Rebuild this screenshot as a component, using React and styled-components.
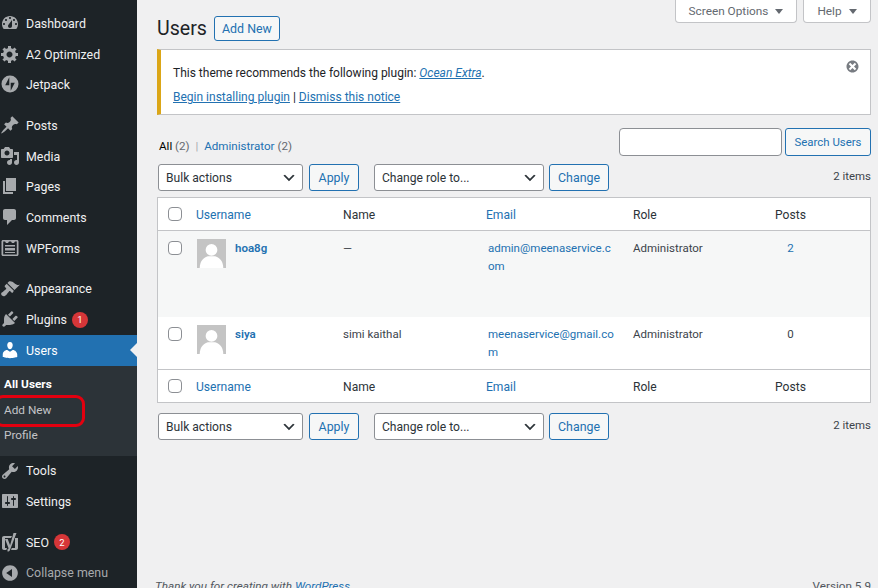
import React from 'react';
import styled, { createGlobalStyle } from 'styled-components';

const GlobalStyle = createGlobalStyle`
  html, body {
    margin: 0;
    height: 100%;
    overflow: hidden;
    background: #f0f0f1;
  }
  body {
    font-family: Roboto, "Open Sans", "Liberation Sans", sans-serif;
    font-size: 12.1px;
    color: #3c434a;
  }
  * {
    box-sizing: border-box;
  }
`;

const chevron = `url("data:image/svg+xml,%3Csvg xmlns='http://www.w3.org/2000/svg' width='16' height='16' viewBox='0 0 20 20'%3E%3Cpath d='M5 6l5 5 5-5 2 1-7 7-7-7z' fill='%232c3338'/%3E%3C/svg%3E")`;

const Page = styled.div`
  display: flex;
  width: 878px;
  height: 588px;
  overflow: hidden;
`;

const Sidebar = styled.nav`
  flex: none;
  width: 137px;
  height: 588px;
  padding-top: 8px;
  background: #1d2327;
`;

const MenuItem = styled.div`
  position: relative;
  display: flex;
  align-items: center;
  height: 30.7px;
  padding-left: 26px;
  font-size: 12.4px;
  color: ${p => (p.$active ? '#fff' : p.$dim ? '#a7aaad' : '#f0f0f1')};
  background: ${p => (p.$active ? '#2271b1' : 'transparent')};
  svg.icon {
    position: absolute;
    left: 0;
    top: 5px;
    width: 20px;
    height: 20px;
    fill: ${p => (p.$active ? '#fff' : '#a7aaad')};
  }
`;

const ActiveArrow = styled.span`
  position: absolute;
  right: 0;
  top: 8px;
  border: 7px solid transparent;
  border-right-color: #f0f0f1;
  border-left-width: 0;
`;

const Separator = styled.div`
  height: 10px;
`;

const Badge = styled.span`
  display: inline-flex;
  align-items: center;
  justify-content: center;
  width: 16px;
  height: 16px;
  margin-left: 5px;
  border-radius: 50%;
  background: #d63638;
  color: #fff;
  font-size: 9.5px;
`;

const SubMenu = styled.div`
  display: flex;
  flex-direction: column;
  height: 90px;
  padding-top: 6px;
  background: #2c3338;
`;

const SubItem = styled.div`
  position: relative;
  display: flex;
  align-items: center;
  height: 25.5px;
  padding-left: 4px;
  font-size: 11.8px;
  font-weight: ${p => (p.$current ? 700 : 400)};
  color: ${p => (p.$current ? '#fff' : '#c3c4c7')};
`;

const RedMark = styled.span`
  position: absolute;
  left: -6px;
  top: -2px;
  width: 91px;
  height: 32px;
  border: 3px solid #e3000f;
  border-radius: 9px;
`;

const Main = styled.main`
  flex: 1;
  min-width: 0;
  display: flex;
  flex-direction: column;
  padding: 0 7px 0 20px;
  > * {
    flex: none;
  }
`;

const ScreenTabs = styled.div`
  display: flex;
  justify-content: flex-end;
  gap: 6px;
  height: 23px;
`;

const ScreenTab = styled.button`
  display: flex;
  align-items: center;
  justify-content: center;
  gap: 7px;
  width: ${p => p.$width}px;
  height: 23px;
  padding: 0;
  border: 1px solid #c3c4c7;
  border-top: 0;
  border-radius: 0 0 4px 4px;
  background: #fff;
  color: #646970;
  font: inherit;
  font-size: 11.8px;
  &::after {
    content: '';
    border: 4px solid transparent;
    border-top: 5px solid #646970;
    border-bottom: 0;
  }
`;

const TitleRow = styled.div`
  display: flex;
  align-items: center;
  gap: 7px;
  height: 26px;
  margin-top: -8px;
`;

const Title = styled.h1`
  margin: 0;
  font-size: 19.6px;
  font-weight: 400;
  color: #1d2327;
`;

const Button = styled.button`
  flex: none;
  height: ${p => p.$height || 27}px;
  width: ${p => p.$width}px;
  padding: 0;
  border: 1px solid #2271b1;
  border-radius: 3px;
  background: #f6f7f7;
  color: #2271b1;
  font: inherit;
  font-size: ${p => p.$size || 12.4}px;
`;

const Notice = styled.div`
  display: flex;
  justify-content: space-between;
  height: 66px;
  margin-top: 8px;
  padding: 11px 12px 0 12px;
  background: #fff;
  border: 1px solid #c3c4c7;
  border-left: 4px solid #dba617;
`;

const NoticeText = styled.div`
  color: #1d2327;
  font-size: 12px;
  line-height: 24px;
  a {
    color: #2271b1;
    text-decoration: underline;
  }
`;

const DismissIcon = styled.svg`
  width: 15px;
  height: 15px;
  margin: -2px -2px 0 0;
  fill: #787c82;
`;

const FilterRow = styled.div`
  display: flex;
  justify-content: space-between;
  align-items: flex-start;
  height: 36px;
  margin-top: 13px;
`;

const Views = styled.div`
  margin: 11px 0 0 2px;
  color: #646970;
  font-size: 11.6px;
  b {
    font-weight: 400;
    color: #000;
  }
  a {
    color: #2271b1;
  }
  i {
    font-style: normal;
    color: #a7aaad;
    margin: 0 3px;
  }
`;

const SearchBox = styled.div`
  display: flex;
  gap: 3px;
`;

const SearchInput = styled.input`
  width: 163px;
  height: 28px;
  border: 1px solid #8c8f94;
  border-radius: 4px;
  background: #fff;
`;

const TableNav = styled.div`
  display: flex;
  align-items: center;
  height: 27px;
  margin-left: 1px;
`;

const Select = styled.select`
  appearance: none;
  flex: none;
  width: ${p => p.$width}px;
  height: 27px;
  margin-left: ${p => p.$before || 0}px;
  margin-right: ${p => p.$gap}px;
  padding: 0 24px 0 7px;
  border: 1px solid #8c8f94;
  border-radius: 3px;
  background: #fff ${chevron} no-repeat right 5px center;
  color: #2c3338;
  font: inherit;
`;

const ItemCount = styled.span`
  margin-left: auto;
  margin-top: -4px;
  color: #3c434a;
  font-size: 11.4px;
`;

const Table = styled.table`
  width: 714px;
  margin: 6px 0 10px;
  table-layout: fixed;
  border-collapse: separate;
  border-spacing: 0;
  background: #fff;
  border: 1px solid #c3c4c7;
`;

const HeadCell = styled.th`
  height: 33px;
  padding: 1px 8px 0;
  text-align: left;
  font-weight: 400;
  color: #2c3338;
  ${p => (p.$foot ? 'border-top: 1px solid #c3c4c7;' : 'border-bottom: 1px solid #c3c4c7;')}
  a {
    color: #2271b1;
  }
`;

const PostsHead = styled(HeadCell)`
  padding: 1px 58px 0 0;
  text-align: center;
`;

const CheckCell = styled(HeadCell)`
  padding: 0 0 0 10px;
`;

const Row = styled.tr`
  background: ${p => (p.$alt ? '#f6f7f7' : '#fff')};
`;

const Cell = styled.td`
  height: ${p => p.$height}px;
  padding: 8px 8px 0;
  vertical-align: top;
  line-height: 18px;
  font-size: 11.5px;
`;

const EmailCell = styled(Cell)`
  padding: 8px 10px 0;
  color: #2271b1;
  word-break: break-all;
`;

const PostsCell = styled(Cell)`
  padding: 8px 58px 0 0;
  text-align: center;
  color: ${p => (p.$linked ? '#2271b1' : '#3c434a')};
`;

const CheckBodyCell = styled(Cell)`
  padding: 10px 0 0 10px;
`;

const UserCell = styled.div`
  display: flex;
  gap: 9px;
  margin-left: 1px;
  color: #2271b1;
  font-weight: 600;
`;

const Avatar = styled.svg`
  flex: none;
  width: 29px;
  height: 29px;
`;

const Checkbox = styled.input`
  appearance: none;
  display: block;
  width: 14px;
  height: 14px;
  margin: 0;
  border: 1px solid #8c8f94;
  border-radius: 4px;
  background: #fff;
`;

const Footer = styled.footer`
  display: flex;
  justify-content: space-between;
  margin: 139px 0 0 -2px;
  color: #50575e;
  font-size: 11.7px;
  i a {
    color: #2271b1;
  }
`;

const Icon = ({ d }) => (
  <svg className="icon" viewBox="0 0 20 20">
    <path d={d} />
  </svg>
);

const icons = {
  dashboard:
    'M3.76 16h12.48c1.1-1.37 1.76-3.11 1.76-5 0-4.42-3.58-8-8-8s-8 3.58-8 8c0 1.89.66 3.63 1.76 5zM10 4c.55 0 1 .45 1 1s-.45 1-1 1-1-.45-1-1 .45-1 1-1zM6 6c.55 0 1 .45 1 1s-.45 1-1 1-1-.45-1-1 .45-1 1-1zm8 0c.55 0 1 .45 1 1s-.45 1-1 1-1-.45-1-1 .45-1 1-1zm-5.37 5.55L12 7v6c0 1.1-.9 2-2 2s-2-.9-2-2c0-.57.24-1.08.63-1.45zM4 10c.55 0 1 .45 1 1s-.45 1-1 1-1-.45-1-1 .45-1 1-1zm12 0c.55 0 1 .45 1 1s-.45 1-1 1-1-.45-1-1 .45-1 1-1z',
  gear:
    'M18 12h-2.18c-.17.7-.44 1.35-.81 1.93l1.54 1.54-2.1 2.1-1.54-1.54c-.58.36-1.23.63-1.91.79V19H8v-2.18c-.68-.16-1.33-.43-1.91-.79l-1.54 1.54-2.12-2.12 1.54-1.54c-.36-.58-.63-1.23-.79-1.91H1V9.03h2.17c.16-.7.44-1.35.8-1.94L2.43 5.55l2.1-2.1 1.54 1.54c.58-.37 1.24-.64 1.93-.81V2h3v2.18c.68.16 1.33.43 1.91.79l1.54-1.54 2.12 2.12-1.54 1.54c.36.59.64 1.24.8 1.94H18V12zm-8.5 1.5c1.66 0 3-1.34 3-3s-1.34-3-3-3-3 1.34-3 3 1.34 3 3 3z',
  jetpack:
    'M10 1.5a8.5 8.5 0 1 0 0 17 8.5 8.5 0 0 0 0-17zM9.3 11.2H5.2l4.1-8zm1.4 5.6V8.8h4.1z',
  pin:
    'M10.44 3.02l1.82-1.82 6.36 6.35-1.83 1.82c-1.05-.68-2.48-.57-3.41.36l-.75.75c-.92.93-1.04 2.35-.35 3.41l-1.83 1.82-2.41-2.41-2.8 2.79c-.42.42-3.38 2.71-3.8 2.29s1.86-3.39 2.28-3.81l2.79-2.79L4.1 9.36l1.83-1.82c1.05.69 2.48.57 3.4-.36l.75-.75c.93-.92 1.05-2.35.36-3.41z',
  media:
    'M13 11V4c0-.55-.45-1-1-1h-1.67L9 1H5L3.67 3H2c-.55 0-1 .45-1 1v7c0 .55.45 1 1 1h10c.55 0 1-.45 1-1zM7 4.5c1.38 0 2.5 1.12 2.5 2.5S8.38 9.5 7 9.5 4.5 8.38 4.5 7 5.62 4.5 7 4.5zM14 6h5v10.5c0 1.38-1.12 2.5-2.5 2.5S14 17.88 14 16.5s1.12-2.5 2.5-2.5c.17 0 .34.02.5.05V9h-3V6zm-4 8.05V13h2v3.5c0 1.38-1.12 2.5-2.5 2.5S7 17.88 7 16.5 8.12 14 9.5 14c.17 0 .34.02.5.05z',
  pages: 'M6 15V2h10v13H6zm-1 1h8v2H3V5h2v11z',
  comments:
    'M5 2h9c1.1 0 2 .9 2 2v7c0 1.1-.9 2-2 2h-2l-5 5v-5H5c-1.1 0-2-.9-2-2V4c0-1.1.9-2 2-2z',
  forms:
    'M3 2h14c.8 0 1.5.7 1.5 1.5v13c0 .8-.7 1.5-1.5 1.5H3c-.8 0-1.5-.7-1.5-1.5v-13C1.5 2.7 2.2 2 3 2zm.2 1.5v13h13.6v-13H15l-1 1.5h-2L11 3.5H9L8 5H6L5 3.5zM5 7h10v1.5H5zm0 3h10v2.5H5zm0 4h10v1H5z',
  brush:
    'M14.48 11.06L7.41 3.99l1.5-1.5c.5-.56 2.3-.47 3.51.32 1.21.8 1.43 1.28 2.91 2.1 1.18.64 2.45 1.26 4.45.85zm-.71.71L6.7 4.7 4.93 6.47c-.39.39-.39 1.02 0 1.41l1.06 1.06c.39.39.39 1.03 0 1.42-.6.6-1.43 1.11-2.21 1.69-.35.26-.7.53-1.01.84C1.43 13.23.4 14.8 2 16.4c1.6 1.6 3.17.57 4.51-.77.31-.31.58-.66.84-1.01.58-.78 1.09-1.61 1.69-2.21.39-.39 1.03-.39 1.42 0l1.06 1.06c.39.39 1.02.39 1.41 0z',
  plugin:
    'M13.11 4.36L9.87 7.6 8 5.73l3.24-3.24c.35-.34 1.05-.2 1.56.32.52.51.66 1.21.31 1.55zm-8 1.77l.91-1.12 9.01 9.01-1.19.84c-.71.71-2.63 1.16-3.82 1.16H6.14L4.9 17.26c-.59.59-1.54.59-2.12 0-.59-.58-.59-1.53 0-2.12l1.24-1.24v-3.88c0-1.13.4-3.19 1.09-3.89zm7.26 3.97l3.24-3.24c.34-.35 1.04-.21 1.55.31.52.51.66 1.21.31 1.55l-3.24 3.25z',
  users:
    'M10 9.25c-2.27 0-2.73-3.44-2.73-3.44C7 4.02 7.82 2 9.97 2c2.16 0 2.98 2.02 2.71 3.81 0 0-.41 3.44-2.68 3.44zm0 2.57L12.72 10c2.39 0 4.52 2.33 4.52 4.53v2.49s-3.65 1.13-7.24 1.13c-3.65 0-7.24-1.13-7.24-1.13v-2.49c0-2.25 1.94-4.48 4.47-4.48z',
  tools:
    'M16.68 9.77c-1.34 1.34-3.3 1.67-4.95.99l-5.41 6.52c-.99.99-2.59.99-3.58 0s-.99-2.59 0-3.57l6.52-5.42c-.68-1.65-.35-3.61.99-4.95 1.28-1.28 3.12-1.62 4.72-1.06l-2.89 2.89 2.82 2.82 2.86-2.87c.53 1.58.18 3.39-1.08 4.65zM3.81 16.21c.4.39 1.04.39 1.43 0 .4-.4.4-1.04 0-1.43-.39-.4-1.03-.4-1.43 0-.39.39-.39 1.03 0 1.43z',
  settings:
    'M18 16V4c0-.55-.45-1-1-1H3c-.55 0-1 .45-1 1v12c0 .55.45 1 1 1h14c.55 0 1-.45 1-1zM8 11h1c.55 0 1 .45 1 1s-.45 1-1 1H8v1.5c0 .28-.22.5-.5.5s-.5-.22-.5-.5V13H6c-.55 0-1-.45-1-1s.45-1 1-1h1V5.5c0-.28.22-.5.5-.5s.5.22.5.5V11zm5-2h-1c-.55 0-1-.45-1-1s.45-1 1-1h1V5.5c0-.28.22-.5.5-.5s.5.22.5.5V7h1c.55 0 1 .45 1 1s-.45 1-1 1h-1v5.5c0 .28-.22.5-.5.5s-.5-.22-.5-.5V9z',
  yoast:
    'M4 4h8l-1 2H5v10h2l-.7 2H4c-1.1 0-2-.9-2-2V6c0-1.1.9-2 2-2zm9.5-3h3L10 18c-.5 1-1.2 1.5-2.5 1.5v-2.2c.6-.1 1-.4 1.1-1L5 7h2.7l2.4 6.2zM15 6h3v10c0 1.1-.9 2-2 2h-5l.8-2H15z',
  collapse:
    'M10 2.16c4.33 0 7.84 3.51 7.84 7.84s-3.51 7.84-7.84 7.84S2.16 14.33 2.16 10 5.71 2.16 10 2.16zm2 11.72V6.12L6.18 9.97z'
};

const Menu = ({ icon, children, active, dim }) => (
  <MenuItem $active={active} $dim={dim}>
    <Icon d={icons[icon]} />
    {children}
    {active && <ActiveArrow />}
  </MenuItem>
);

const MysteryMan = () => (
  <Avatar viewBox="0 0 32 32">
    <rect width="32" height="32" fill="#c4c4c4" />
    <circle cx="16" cy="12" r="6.5" fill="#fff" />
    <path d="M3 32c0-8 5-12 9-13h8c4 1 9 5 9 13z" fill="#fff" />
  </Avatar>
);

const Actions = () => (
  <TableNav>
    <Select $width={145} $gap={6} defaultValue="bulk">
      <option value="bulk">Bulk actions</option>
    </Select>
    <Button $width={50}>Apply</Button>
    <Select $width={170} $before={15} $gap={5} defaultValue="role">
      <option value="role">Change role to...</option>
    </Select>
    <Button $width={60}>Change</Button>
    <ItemCount>2 items</ItemCount>
  </TableNav>
);

const HeaderRow = ({ foot }) => (
  <tr>
    <CheckCell $foot={foot}>
      <Checkbox type="checkbox" />
    </CheckCell>
    <HeadCell $foot={foot}>
      <a>Username</a>
    </HeadCell>
    <HeadCell $foot={foot}>Name</HeadCell>
    <HeadCell $foot={foot}>
      <a>Email</a>
    </HeadCell>
    <HeadCell $foot={foot}>Role</HeadCell>
    <PostsHead $foot={foot}>Posts</PostsHead>
  </tr>
);

const App = () => {
  return (
    <Page>
      <GlobalStyle />
      <Sidebar>
        <Menu icon="dashboard">Dashboard</Menu>
        <Menu icon="gear">A2 Optimized</Menu>
        <Menu icon="jetpack">Jetpack</Menu>
        <Separator />
        <Menu icon="pin">Posts</Menu>
        <Menu icon="media">Media</Menu>
        <Menu icon="pages">Pages</Menu>
        <Menu icon="comments">Comments</Menu>
        <Menu icon="forms">WPForms</Menu>
        <Separator />
        <Menu icon="brush">Appearance</Menu>
        <Menu icon="plugin">
          Plugins<Badge>1</Badge>
        </Menu>
        <Menu icon="users" active>
          Users
        </Menu>
        <SubMenu>
          <SubItem $current>All Users</SubItem>
          <SubItem>
            Add New
            <RedMark />
          </SubItem>
          <SubItem>Profile</SubItem>
        </SubMenu>
        <Menu icon="tools">Tools</Menu>
        <Menu icon="settings">Settings</Menu>
        <Separator />
        <Menu icon="yoast">
          SEO<Badge>2</Badge>
        </Menu>
        <Menu icon="collapse" dim>
          Collapse menu
        </Menu>
      </Sidebar>
      <Main>
        <ScreenTabs>
          <ScreenTab $width={122}>Screen Options</ScreenTab>
          <ScreenTab $width={68}>Help</ScreenTab>
        </ScreenTabs>
        <TitleRow>
          <Title>Users</Title>
          <Button $width={66} $height={25}>
            Add New
          </Button>
        </TitleRow>
        <Notice>
          <NoticeText>
            <div>
              This theme recommends the following plugin:{' '}
              <a>
                <i>Ocean Extra</i>
              </a>
              .
            </div>
            <div>
              <a>Begin installing plugin</a> | <a>Dismiss this notice</a>
            </div>
          </NoticeText>
          <DismissIcon viewBox="0 0 20 20">
            <path d="M10 2c4.42 0 8 3.58 8 8s-3.58 8-8 8-8-3.58-8-8 3.58-8 8-8zm5 11l-3-3 3-3-2-2-3 3-3-3-2 2 3 3-3 3 2 2 3-3 3 3z" />
          </DismissIcon>
        </Notice>
        <FilterRow>
          <Views>
            <b>All</b> (2) <i>|</i> <a>Administrator</a> (2)
          </Views>
          <SearchBox>
            <SearchInput type="search" />
            <Button $width={86} $height={28} $size={11.4}>
              Search Users
            </Button>
          </SearchBox>
        </FilterRow>
        <Actions />
        <Table>
          <colgroup>
            <col style={{ width: 30 }} />
            <col style={{ width: 147 }} />
            <col style={{ width: 143 }} />
            <col style={{ width: 147 }} />
            <col style={{ width: 144 }} />
            <col />
          </colgroup>
          <thead>
            <HeaderRow />
          </thead>
          <tbody>
            <Row $alt>
              <CheckBodyCell $height={86}>
                <Checkbox type="checkbox" />
              </CheckBodyCell>
              <Cell $height={86}>
                <UserCell>
                  <MysteryMan />
                  hoa8g
                </UserCell>
              </Cell>
              <Cell $height={86}>—</Cell>
              <EmailCell $height={86}>admin@meenaservice.com</EmailCell>
              <Cell $height={86}>Administrator</Cell>
              <PostsCell $height={86} $linked>
                2
              </PostsCell>
            </Row>
            <Row>
              <CheckBodyCell $height={52}>
                <Checkbox type="checkbox" />
              </CheckBodyCell>
              <Cell $height={52}>
                <UserCell>
                  <MysteryMan />
                  siya
                </UserCell>
              </Cell>
              <Cell $height={52}>simi kaithal</Cell>
              <EmailCell $height={52}>meenaservice@gmail.com</EmailCell>
              <Cell $height={52}>Administrator</Cell>
              <PostsCell $height={52}>0</PostsCell>
            </Row>
          </tbody>
          <tfoot>
            <HeaderRow foot />
          </tfoot>
        </Table>
        <Actions />
        <Footer>
          <i>
            Thank you for creating with <a>WordPress</a>.
          </i>
          <span>Version 5.9</span>
        </Footer>
      </Main>
    </Page>
  );
};

export default App;
